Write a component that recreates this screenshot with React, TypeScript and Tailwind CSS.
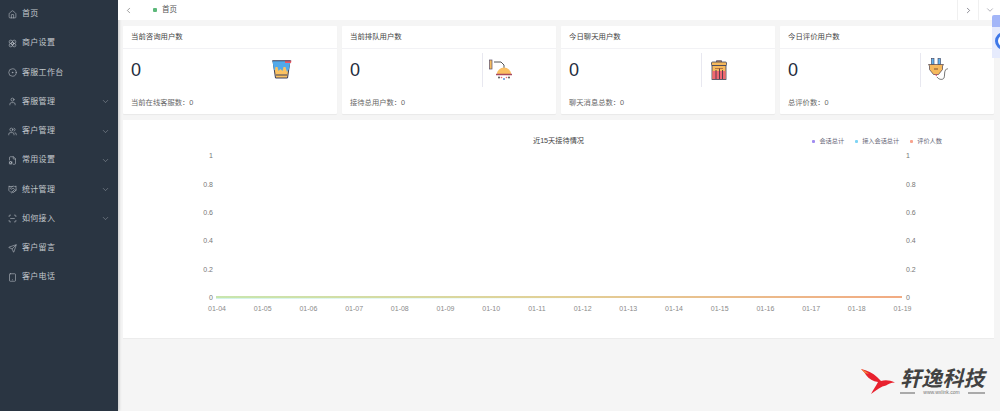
import { Home, Flower, CircleDot, User, Users, FileCog, Handshake, ScanLine, Send, Tablet, ChevronDown, ChevronLeft, ChevronRight } from "lucide-react";
import type { ReactNode } from "react";

const nav = [
  { t: "首页", I: Home },
  { t: "商户设置", I: Flower },
  { t: "客服工作台", I: CircleDot },
  { t: "客服管理", I: User, c: true },
  { t: "客户管理", I: Users, c: true },
  { t: "常用设置", I: FileCog, c: true },
  { t: "统计管理", I: Handshake, c: true },
  { t: "如何接入", I: ScanLine, c: true },
  { t: "客户留言", I: Send },
  { t: "客户电话", I: Tablet },
];

const Bucket = () => (
  <svg width="21" height="19" viewBox="0 0 21 19">
    <path d="M2 1h17l-2.500 17H4.500z" fill="#fbc261" stroke="#3a3f5c" strokeWidth="1" />
    <path d="M1.500 1h18l-1.500 8-2 3-1.500-5-2 0-1 4-2-2-2 2-1-4-2 0-.5 3-1 0z" fill="#52a9ea" />
    <path d="M14 .5h6.500l-.5 2.500H14z" fill="#ef5a66" />
    <path d="M1 .8h19" stroke="#3a3f5c" strokeWidth="0.800" />
    <path d="M5 15h11" stroke="#3a3f5c" strokeWidth="1" />
  </svg>
);
const Shower = () => (
  <svg width="23" height="22" viewBox="0 0 23 22">
    <rect x="0.500" y="1" width="2.500" height="9" fill="#f6bd60" stroke="#5a4f6a" strokeWidth="0.700" />
    <path d="M5 3h7l3 3v3" fill="none" stroke="#555" strokeWidth="1" />
    <path d="M8 15a7 6.500 0 0 1 14 0z" fill="#fbbf63" />
    <path d="M7 15.500h16" stroke="#a8485f" strokeWidth="1.500" />
    <circle cx="10" cy="18.500" r="1" fill="#555" />
    <circle cx="15" cy="20" r="1" fill="#5a8fd8" />
    <circle cx="20" cy="18.500" r="1" fill="#555" />
    <circle cx="12.500" cy="18.500" r="0.800" fill="#e56b7d" />
    <circle cx="17.500" cy="18.500" r="0.800" fill="#e56b7d" />
  </svg>
);
const Trash = () => (
  <svg width="16" height="20" viewBox="0 0 16 20">
    <path d="M5.500 2V.7h5V2" fill="#c9925a" stroke="#5a4f6a" strokeWidth="0.800" />
    <rect x="0.500" y="2" width="15" height="3.500" rx="1" fill="#f6b95d" stroke="#3a3f5c" strokeWidth="0.800" />
    <rect x="1" y="5.500" width="14" height="14" fill="#f6b95d" stroke="#3a3f5c" strokeWidth="0.800" />
    <rect x="1.500" y="11" width="13" height="8" fill="#ef6672" />
    <path d="M5 10v9M8.500 8v11M11.500 10v9" stroke="#5a3f4c" strokeWidth="1" />
    <path d="M4 8.500h8" stroke="#a8643a" strokeWidth="0.800" />
  </svg>
);
const Plug = () => (
  <svg width="21" height="23" viewBox="0 0 21 23">
    <rect x="3.500" y="0.500" width="2.500" height="6" fill="#63b4ee" stroke="#3a3f5c" strokeWidth="0.600" />
    <rect x="10" y="0.500" width="2.500" height="6" fill="#63b4ee" stroke="#3a3f5c" strokeWidth="0.600" />
    <path d="M0.500 6.500h15l-1 1.500v3.500l-4 5h-5l-4-5V8z" fill="#f6b95d" stroke="#4a4050" strokeWidth="0.700" />
    <path d="M6 11h4" stroke="#7a5030" strokeWidth="1" />
    <path d="M7 16.500h2.500l-1.200 2z" fill="#e4596b" />
    <path d="M9 19c2 3 6 3 7 1s0-6 1.500-8 2-1 2.500-1" fill="none" stroke="#555" strokeWidth="0.800" />
  </svg>
);

const cards: { title: string; foot: string; icon: ReactNode; line: boolean; pad: string }[] = [
  { title: "当前咨询用户数", foot: "当前在线客服数：0", icon: <Bucket />, line: false, pad: "pl-[8px]" },
  { title: "当前排队用户数", foot: "接待总用户数：0", icon: <Shower />, line: true, pad: "pl-[6px]" },
  { title: "今日聊天用户数", foot: "聊天消息总数：0", icon: <Trash />, line: true, pad: "pl-[9px]" },
  { title: "今日评价用户数", foot: "总评价数：0", icon: <Plug />, line: true, pad: "pl-[7px]" },
];

const dates = ["01-04","01-05","01-06","01-07","01-08","01-09","01-10","01-11","01-12","01-13","01-14","01-15","01-16","01-17","01-18","01-19"];
const ticks = [["1", 35], ["0.8", 63.500], ["0.6", 92], ["0.4", 120], ["0.2", 149], ["0", 177]] as const;

function Chart() {
  return (
    <svg width="871" height="219" viewBox="0 0 871 219" className="block">
      <defs>
        <linearGradient id="g" x1="0" x2="1" y1="0" y2="0">
          <stop offset="0" stopColor="#c8e6ae" />
          <stop offset="0.500" stopColor="#e2d097" />
          <stop offset="1" stopColor="#f2ab82" />
        </linearGradient>
        <linearGradient id="m" x1="0" x2="1" y1="0" y2="0">
          <stop offset="0" stopColor="#bfeee0" />
          <stop offset="1" stopColor="#bfeee0" stopOpacity="0" />
        </linearGradient>
      </defs>
      {ticks.map(([t, y]) => (
        <g key={t} fontSize="7" fill="#777">
          <text x="90" y={y + 3} textAnchor="end">{t}</text>
          <text x="783" y={y + 3}>{t}</text>
        </g>
      ))}
      <rect x="93" y="176" width="686" height="2" fill="url(#g)" />
      <rect x="93" y="178" width="400" height="0.700" fill="url(#m)" />
      {dates.map((d, i) => (
        <text key={d} x={94 + i * 45.700} y="191" fontSize="7" fill="#8a8a8a" textAnchor="middle">{d}</text>
      ))}
    </svg>
  );
}

export default function App() {
  return (
    <div className="relative flex h-[411px] w-[1000px] overflow-hidden bg-[#f5f5f5] font-['Liberation_Sans','Noto_Sans_CJK_SC',sans-serif]">
      <aside className="h-full w-[118px] shrink-0 bg-[#2a3542] shadow-[1px_0_3px_rgba(0,0,0,0.2)]">
        {nav.map(({ t, I, c }) => (
          <div key={t} className="flex h-[29.250px] items-center px-[8px] pb-[1px] text-[8px] text-[#c3c8cd]">
            <I size={9} strokeWidth={1.500} className="mr-[5px] text-[#bfc5cb]" />
            <span className="flex-1 tracking-[0.300px]">{t}</span>
            {c && <ChevronDown size={9} strokeWidth={1.200} className="text-[#a9b0b8]" />}
          </div>
        ))}
      </aside>

      <main className="flex min-w-0 flex-1 flex-col">
        <header className="flex h-[20px] items-center bg-white">
          <ChevronLeft size={9} strokeWidth={1.500} className="ml-[6px] text-[#555]" />
          <span className="ml-[20px] h-[4px] w-[4px] rounded-[1px] bg-[#5cb87a]" />
          <span className="ml-[5px] flex-1 text-[7.500px] text-[#555]">首页</span>
          <div className="flex h-full w-[21px] items-center justify-center border-l border-[#f0f0f0]">
            <ChevronRight size={9} strokeWidth={1.500} className="text-[#334]" />
          </div>
          <div className="flex h-full w-[22px] items-center justify-center border-l border-[#f0f0f0]">
            <ChevronDown size={10} strokeWidth={1.200} className="text-[#667]" />
          </div>
        </header>

        <section className="mt-[6px] grid grid-cols-4 gap-[5px] pl-[5px] pr-[6px]">
          {cards.map((c) => (
            <div key={c.title} className="h-[88px] rounded-[1px] bg-white shadow-[0_1px_1px_rgba(0,0,0,0.05)]">
              <div className="flex h-[23px] items-center border-b border-[#f2f2f5] pl-[8px] text-[7.400px] text-[#444]">{c.title}</div>
              <div className="flex h-[41px] items-center">
                <div className="w-[140px] pl-[8px] text-[18px] leading-none text-[#1f2d3d]">0</div>
                <div className={`flex h-[34px] flex-1 items-center ${c.pad} ${c.line ? "border-l border-[#e8e8f0]" : ""}`}>{c.icon}</div>
              </div>
              <div className="flex h-[24px] items-center pl-[8px] pt-[2px] text-[7.300px] text-[#666]">{c.foot}</div>
            </div>
          ))}
        </section>

        <section className="relative ml-[5px] mr-[6px] mt-[6px] h-[219px] border-b border-[#ececec] bg-white">
          <div className="absolute left-0 right-0 top-[16px] text-center text-[7.200px] leading-[10px] text-[#444]">近15天接待情况</div>
          <div className="absolute right-[52px] top-[16px] flex items-center gap-[11px] text-[6.200px] leading-[10px] text-[#667]">
            <span className="flex items-center gap-[4px]"><i className="h-[3px] w-[3px] rounded-[1px] bg-[#a18cf0]" />会话总计</span>
            <span className="flex items-center gap-[4px]"><i className="h-[3px] w-[3px] rounded-[1px] bg-[#7fd4f4]" />接入会话总计</span>
            <span className="flex items-center gap-[4px]"><i className="h-[3px] w-[3px] rounded-[1px] bg-[#f8a38e]" />评价人数</span>
          </div>
          <Chart />
        </section>
      </main>

      {/* floating side widget */}
      <div className="absolute right-0 top-[15px] w-[8px]">
        <div className="h-[12px] rounded-tl-[2px] bg-[#a3b6f8]" />
        <div className="relative h-[31px] overflow-hidden bg-[#e6ebfd]">
          <div className="absolute left-[3px] top-[5px] h-[18px] w-[18px] rounded-full border-[3px] border-[#3f78e8] bg-white" />
        </div>
      </div>

      {/* watermark logo */}
      <div className="absolute left-[860px] top-[367px] flex items-start">
        <svg width="36" height="28" viewBox="0 0 36 28" className="mt-[1px]">
          <path d="M1 1c6 1.500 12 4 16 8l4 4c4-1.500 9-1 14 1.500-4 0-7 1.500-9 3-5 1-9 4-15 8.500 2-4 5-8 7-12-5-.5-9-3-12-7C5 5 3 3 1 1z" fill="#e8212e" />
          <path d="M1 1c3 1 6 3 8 5l-4-1C4 4 2 2 1 1z" fill="#f58a3c" />
        </svg>
        <div className="ml-[4px] flex w-[85px] flex-col">
          <div className="text-[21px] font-bold italic leading-[23px] tracking-[0.200px] text-[#424242]">轩逸科技</div>
          <div className="flex items-center justify-between">
            <span className="h-[2px] w-[15px] bg-[#aaa]" />
            <span className="text-[5px] leading-[5px] text-[#777]">www.wxlink.com</span>
            <span className="h-[2px] w-[17px] bg-[#aaa]" />
          </div>
        </div>
      </div>
    </div>
  );
}
